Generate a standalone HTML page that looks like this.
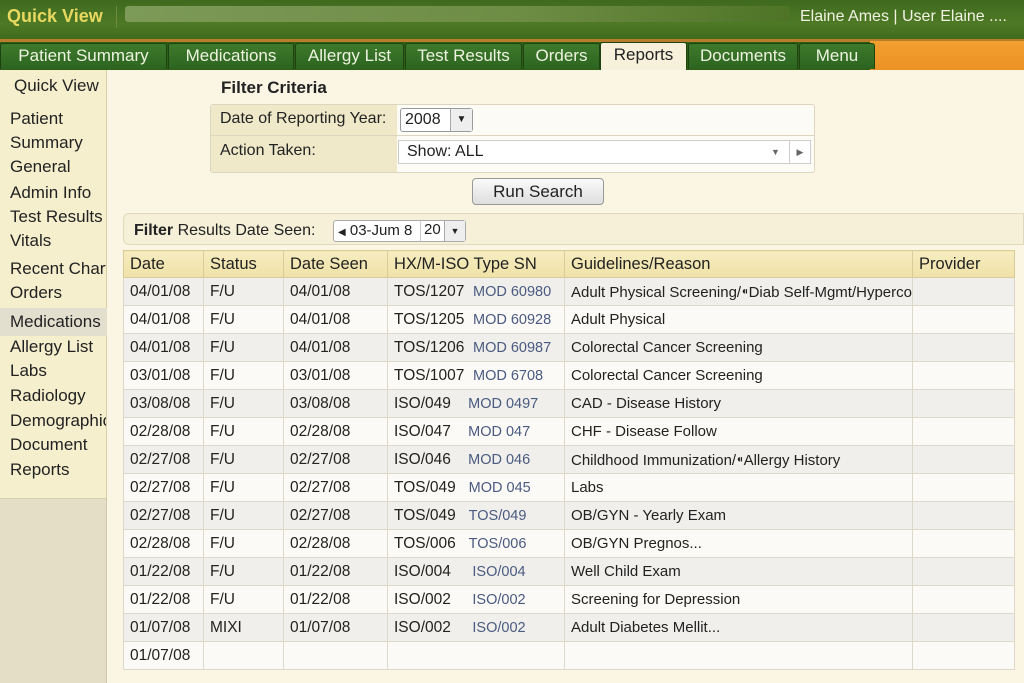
<!DOCTYPE html>
<html><head><style>
*{margin:0;padding:0;box-sizing:border-box}
body{width:1024px;height:683px;overflow:hidden;background:#fbf6e4;font-family:"Liberation Sans","DejaVu Sans",sans-serif;color:#222;position:relative}
.a{position:absolute;white-space:nowrap}
#top{left:0;top:0;width:1024px;height:40px;background:linear-gradient(#3f6a1e,#4e7a26 60%,#3d6a1c)}
#tabs{left:0;top:40px;width:1024px;height:30px;background:#2f5e16}
.tab{position:absolute;top:43px;height:26px;background:linear-gradient(#3e7a2c,#2c6420);color:#eef3e0;font-size:17px;line-height:24px;text-align:center;border:1px solid #1d4410;border-bottom:none;border-radius:3px 3px 0 0}
.side{font-size:17px;left:10px}
table{position:absolute;left:123px;top:250px;width:891px;table-layout:fixed;border-collapse:collapse;font-size:15.5px;border:1px solid #ccc4a6}
td,th{border:1px solid #dcd8cc;height:28px;padding:0 6px;text-align:left;white-space:nowrap;overflow:hidden}
td:nth-child(5){font-size:15px}
th{background:linear-gradient(#f6ecbf,#efe2a8);font-weight:normal;font-size:16.5px;height:27px;border-color:#d8cc98}
tr:nth-child(even) td{background:#f0efeb}
tr:nth-child(odd) td{background:#fbfaf6}
.m{color:#4a5a80;font-size:14.5px}
</style></head><body>
<div class="a" id="top"></div>
<div class="a" style="left:7px;top:6px;font-size:18px;font-weight:bold;color:#e8d860">Quick View</div>
<div class="a" style="left:116px;top:6px;width:1px;height:22px;background:#6c8c40"></div>
<div class="a" style="left:125px;top:6px;width:665px;height:16px;background:linear-gradient(90deg,#7d9a58,#6d8c44 60%,#4e7426);border-radius:3px"></div>
<div class="a" style="left:800px;top:8px;font-size:16px;color:#f2f2e4">Elaine Ames | User Elaine ....</div>
<div class="a" id="tabs"></div>
<div class="a" style="left:0;top:39px;width:1024px;height:3px;background:#b87c2a"></div>
<div class="a" style="left:870px;top:41px;width:154px;height:29px;background:linear-gradient(#f2a030,#ec9224)"></div>
<div class="tab" style="left:0;width:167px">Patient Summary</div>
<div class="tab" style="left:168px;width:126px">Medications</div>
<div class="tab" style="left:295px;width:109px">Allergy List</div>
<div class="tab" style="left:405px;width:117px">Test Results</div>
<div class="tab" style="left:523px;width:77px">Orders</div>
<div class="tab" style="left:600px;width:87px;background:#f7f1dc;color:#222;top:42px;height:28px">Reports</div>
<div class="tab" style="left:688px;width:110px">Documents</div>
<div class="tab" style="left:799px;width:76px">Menu</div>
<div class="a" style="left:0;top:70px;width:107px;height:428px;background:#f6efce;border-right:1px solid #d8cfa8"></div>
<div class="a" style="left:0;top:498px;width:107px;height:185px;background:#e5dec6;border-right:1px solid #cfc7ab;border-top:1px solid #d6cfb4"></div>
<div class="a" style="left:0;top:308px;width:107px;height:28px;background:#e3dfcf"></div>
<div class="a side" style="left:14px;top:76px">Quick View</div>
<div class="a side" style="top:109px">Patient</div>
<div class="a side" style="top:133px">Summary</div>
<div class="a side" style="top:157px">General</div>
<div class="a side" style="top:183px">Admin Info</div>
<div class="a side" style="top:207px">Test Results</div>
<div class="a side" style="top:231px">Vitals</div>
<div class="a side" style="top:259px;width:96px;overflow:hidden">Recent Charts</div>
<div class="a side" style="top:283px">Orders</div>
<div class="a side" style="top:312px">Medications</div>
<div class="a side" style="top:337px">Allergy List</div>
<div class="a side" style="top:361px">Labs</div>
<div class="a side" style="top:386px">Radiology</div>
<div class="a side" style="top:411px;width:96px;overflow:hidden">Demographics</div>
<div class="a side" style="top:435px">Document</div>
<div class="a side" style="top:460px">Reports</div>

<div class="a" style="left:221px;top:78px;font-size:17px;font-weight:bold">Filter Criteria</div>
<div class="a" style="left:210px;top:104px;width:605px;height:69px;border:1px solid #ddd6bf;background:#fcfbf5;border-radius:3px"></div>
<div class="a" style="left:211px;top:105px;width:186px;height:67px;background:#efe8c9"></div>
<div class="a" style="left:211px;top:135px;width:603px;height:1px;background:#ddd6bf"></div>
<div class="a" style="left:220px;top:110px;font-size:16px">Date of Reporting Year:</div>
<div class="a" style="left:220px;top:142px;font-size:16px">Action Taken:</div>
<div class="a" style="left:400px;top:108px;width:73px;height:24px;border:1px solid #999;background:#fff;border-radius:3px;font-size:16px;padding:2px 4px">2008</div>
<div class="a" style="left:450px;top:109px;width:22px;height:22px;border-left:1px solid #aaa;background:#eee;font-size:10px;text-align:center;line-height:22px">▼</div>
<div class="a" style="left:398px;top:140px;width:413px;height:24px;border:1px solid #ccc;background:#fff;font-size:16px;padding:2px 8px">Show: ALL</div>
<div class="a" style="left:771px;top:147px;font-size:9px;color:#666">▼</div>
<div class="a" style="left:789px;top:141px;width:21px;height:22px;border-left:1px solid #ccc;font-size:9px;color:#666;text-align:center;line-height:22px">▶</div>
<div class="a" style="left:472px;top:178px;width:132px;height:27px;border:1px solid #999;border-radius:4px;background:linear-gradient(#fafafa,#dedede);font-size:17px;text-align:center;line-height:25px">Run Search</div>

<div class="a" style="left:123px;top:213px;width:901px;height:32px;border:1px solid #e0d9be;background:#f6f0d8;border-radius:6px 0 0 6px"></div>
<div class="a" style="left:134px;top:222px;font-size:16px"><b>Filter</b> Results Date Seen:</div>
<div class="a" style="left:333px;top:220px;width:133px;height:22px;border:1px solid #aaa;background:#fff;border-radius:3px;font-size:15px;padding:1px 4px"><span style="font-size:10px">◀</span> 03-Jum 8</div>
<div class="a" style="left:420px;top:221px;width:24px;height:20px;border-left:1px solid #ccc;font-size:15px;padding-left:3px">20</div>
<div class="a" style="left:444px;top:221px;width:21px;height:20px;border-left:1px solid #aaa;background:#eee;font-size:9px;text-align:center;line-height:20px">▼</div>

<table>
<colgroup><col style="width:80px"><col style="width:80px"><col style="width:104px"><col style="width:177px"><col style="width:348px"><col style="width:102px"></colgroup>
<tr><th>Date</th><th>Status</th><th>Date Seen</th><th>HX/M-ISO Type SN</th><th>Guidelines/Reason</th><th>Provider</th></tr>
<tr><td>04/01/08</td><td>F/U</td><td>04/01/08</td><td>TOS/1207 &nbsp;<span class="m">MOD 60980</span></td><td>Adult Physical Screening/⁌Diab Self-Mgmt/Hypercolo</td><td></td></tr>
<tr><td>04/01/08</td><td>F/U</td><td>04/01/08</td><td>TOS/1205 &nbsp;<span class="m">MOD 60928</span></td><td>Adult Physical</td><td></td></tr>
<tr><td>04/01/08</td><td>F/U</td><td>04/01/08</td><td>TOS/1206 &nbsp;<span class="m">MOD 60987</span></td><td>Colorectal Cancer Screening</td><td></td></tr>
<tr><td>03/01/08</td><td>F/U</td><td>03/01/08</td><td>TOS/1007 &nbsp;<span class="m">MOD 6708</span></td><td>Colorectal Cancer Screening</td><td></td></tr>
<tr><td>03/08/08</td><td>F/U</td><td>03/08/08</td><td>ISO/049 &nbsp;&nbsp;&nbsp;<span class="m">MOD 0497</span></td><td>CAD - Disease History</td><td></td></tr>
<tr><td>02/28/08</td><td>F/U</td><td>02/28/08</td><td>ISO/047 &nbsp;&nbsp;&nbsp;<span class="m">MOD 047</span></td><td>CHF - Disease Follow</td><td></td></tr>
<tr><td>02/27/08</td><td>F/U</td><td>02/27/08</td><td>ISO/046 &nbsp;&nbsp;&nbsp;<span class="m">MOD 046</span></td><td>Childhood Immunization/⁌Allergy History</td><td></td></tr>
<tr><td>02/27/08</td><td>F/U</td><td>02/27/08</td><td>TOS/049 &nbsp;&nbsp;<span class="m">MOD 045</span></td><td>Labs</td><td></td></tr>
<tr><td>02/27/08</td><td>F/U</td><td>02/27/08</td><td>TOS/049 &nbsp;&nbsp;<span class="m">TOS/049</span></td><td>OB/GYN - Yearly Exam</td><td></td></tr>
<tr><td>02/28/08</td><td>F/U</td><td>02/28/08</td><td>TOS/006 &nbsp;&nbsp;<span class="m">TOS/006</span></td><td>OB/GYN Pregnos...</td><td></td></tr>
<tr><td>01/22/08</td><td>F/U</td><td>01/22/08</td><td>ISO/004 &nbsp;&nbsp;&nbsp;&nbsp;<span class="m">ISO/004</span></td><td>Well Child Exam</td><td></td></tr>
<tr><td>01/22/08</td><td>F/U</td><td>01/22/08</td><td>ISO/002 &nbsp;&nbsp;&nbsp;&nbsp;<span class="m">ISO/002</span></td><td>Screening for Depression</td><td></td></tr>
<tr><td>01/07/08</td><td>MIXI</td><td>01/07/08</td><td>ISO/002 &nbsp;&nbsp;&nbsp;&nbsp;<span class="m">ISO/002</span></td><td>Adult Diabetes Mellit...</td><td></td></tr>
<tr><td>01/07/08</td><td></td><td></td><td></td><td></td><td></td></tr>
</table>
</body></html>
